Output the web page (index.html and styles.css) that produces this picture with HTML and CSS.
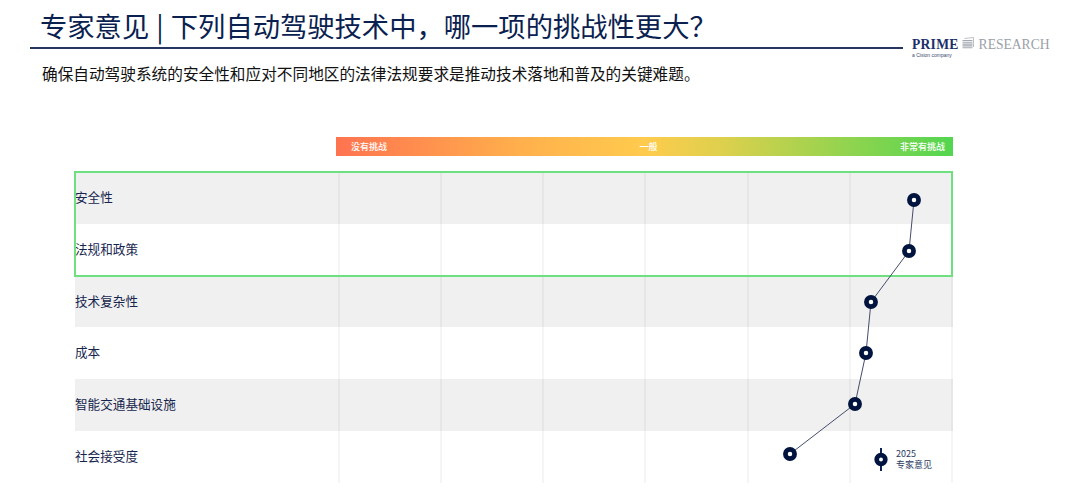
FILE: index.html
```html
<!DOCTYPE html>
<html lang="zh">
<head>
<meta charset="utf-8">
<title>专家意见</title>
<link rel="stylesheet" href="styles.css">
</head>
<body>
<header class="top">
  <h1 class="title">专家意见 | 下列自动驾驶技术中，哪一项的挑战性更大？</h1>
  <div class="logo">
    <div class="logo-main">
      <span class="prime">PRIME</span>
      <svg class="logo-icon" width="14" height="13" viewBox="0 0 14 13">
        <path d="M0.5 3.5h10M0.5 5.300h10M0.500 7.100h10M0.500 8.900h10M0.500 10.700h10" stroke="#a4a9b0" stroke-width="1.1" fill="none"/>
        <path d="M2.500 1.500l9-1v9.500" stroke="#b4b8be" stroke-width="0.9" fill="none"/>
      </svg>
      <span class="research">RESEARCH</span>
    </div>
    <div class="cision">a Cision company</div>
  </div>
</header>
<p class="summary">确保自动驾驶系统的安全性和应对不同地区的法律法规要求是推动技术落地和普及的关键难题。</p>
<div class="scale">
  <span>没有挑战</span>
  <span class="scale-mid">一般</span>
  <span>非常有挑战</span>
</div>
<section class="chart">
  <div class="row"><div class="label">安全性</div><i></i><i></i><i></i><i></i><i></i><i></i></div>
  <div class="row"><div class="label">法规和政策</div><i></i><i></i><i></i><i></i><i></i><i></i></div>
  <div class="row"><div class="label">技术复杂性</div><i></i><i></i><i></i><i></i><i></i><i></i></div>
  <div class="row"><div class="label">成本</div><i></i><i></i><i></i><i></i><i></i><i></i></div>
  <div class="row"><div class="label">智能交通基础设施</div><i></i><i></i><i></i><i></i><i></i><i></i></div>
  <div class="row"><div class="label">社会接受度</div><i></i><i></i><i></i><i></i><i></i><i></i></div>
  <div class="highlight"></div>
  <svg class="plot" width="878" height="311" viewBox="75 172 878 311">
    <polyline class="plot-line" points="914,200 909,251 871,302 866,353 855,404 790,454"/>
    <circle class="dot" cx="914" cy="200" r="4.6"/>
    <circle class="dot" cx="909" cy="251" r="4.6"/>
    <circle class="dot" cx="871" cy="302" r="4.6"/>
    <circle class="dot" cx="866" cy="353" r="4.6"/>
    <circle class="dot" cx="855" cy="404" r="4.6"/>
    <circle class="dot" cx="790" cy="454" r="4.6"/>
    <line class="legend-line" x1="881" y1="448" x2="881" y2="471"/>
    <circle class="dot" cx="881" cy="459.500" r="4.300"/>
  </svg>
  <div class="legend">2025<br>专家意见</div>
</section>
</body>
</html>
```
FILE: styles.css
```css
* { box-sizing: border-box; }
html, body { margin: 0; padding: 0; background: #fff; }
body {
  width: 1080px;
  height: 498px;
  overflow: hidden;
  font-family: "Noto Sans CJK SC", "Noto Sans", sans-serif;
  color: #0b1f4b;
}
.top {
  display: flex;
  align-items: flex-start;
  gap: 9px;
  padding-left: 30px;
  height: 57px;
}
.title {
  width: 873px;
  height: 49px;
  margin: 0;
  padding-left: 10px;
  border-bottom: 2px solid #24355f;
  font-size: 27.3px;
  font-weight: 400;
  word-spacing: 1px;
  line-height: 51px;
  white-space: nowrap;
  color: #0a2150;
}
.logo { margin-top: 38px; width: 140px; }
.logo-main {
  display: flex;
  align-items: center;
  font-family: "Liberation Serif", serif;
  height: 14px;
  white-space: nowrap;
}
.prime { font-size: 13.6px; font-weight: 700; color: #1b2f6b; letter-spacing: 0.25px; }
.logo-icon { margin: 0 3px 3px 3px; flex: none; }
.research { font-size: 13.6px; color: #9aa0a8; }
.cision {
  font-family: "Liberation Sans", sans-serif;
  font-size: 5px;
  line-height: 6px;
  color: #3c4a70;
}
.summary {
  height: 80px;
  margin: 0;
  padding-left: 42px;
  font-size: 15.67px;
  line-height: 34px;
  color: #111;
  white-space: nowrap;
}
.scale {
  display: flex;
  justify-content: space-between;
  align-items: center;
  width: 617px;
  height: 19px;
  margin-left: 336px;
  padding: 0 8px 0 15px;
  background: linear-gradient(90deg, #ff7350 0%, #ffb04c 30%, #ffcb4d 50%, #dfd04d 62%, #52d650 100%);
  font-size: 9px;
  line-height: 19px;
  font-weight: 500;
  color: #fff;
}
.scale-mid { margin-left: 10px; }
.chart {
  position: relative;
  width: 878px;
  height: 311px;
  margin: 16px 0 0 75px;
}
.row {
  display: grid;
  grid-template-columns: 263px repeat(5, 102.17px) 1fr;
  height: 51.83px;
  background: #fff;
}
.row:nth-child(odd) { background: #f0f0f0; }
.row i { border-left: 2px solid rgba(0, 0, 0, 0.04); }
.row i:last-child { border-right: 2px solid rgba(0, 0, 0, 0.04); }
.label {
  font-size: 12.6px;
  line-height: 50.6px;
  white-space: nowrap;
  color: #16254d;
}
.highlight {
  position: absolute;
  left: -1px;
  top: -1px;
  width: 879px;
  height: 106px;
  border: 2px solid #6fe080;
}
.plot { position: absolute; left: 0; top: 0; }
.plot-line { fill: none; stroke: #444d6b; stroke-width: 1; }
.dot { fill: #fff; stroke: #00143f; stroke-width: 4.7; }
.legend-line { stroke: #0d2354; stroke-width: 2; }
.legend {
  position: absolute;
  left: 821px;
  top: 276px;
  font-size: 9px;
  line-height: 11px;
  color: #29395f;
  white-space: nowrap;
}
```
